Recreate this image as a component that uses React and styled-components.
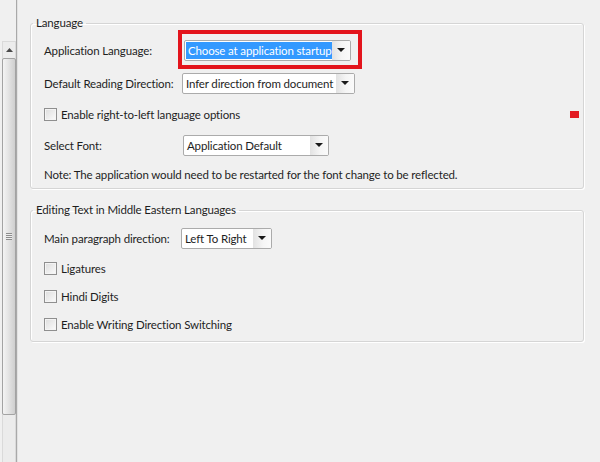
import styled, { createGlobalStyle } from 'styled-components';

const GlobalStyle = createGlobalStyle`
  html, body {
    margin: 0;
    padding: 0;
    background: #f0f0f0;
  }
  body {
    font-family: "Segoe UI", Lato, "Noto Sans", sans-serif;
    font-size: 11.5px;
    letter-spacing: -0.15px;
    color: #1e1e1e;
  }
`;

const Page = styled.div`
  display: flex;
  width: 600px;
  height: 462px;
  overflow: hidden;
  background: #f0f0f0;
`;

const Sidebar = styled.div`
  width: 17px;
  flex-shrink: 0;
  border-right: 1px solid #a9a9a9;
  box-shadow: 1px 0 0 #e2e2e2;
  display: flex;
  flex-direction: column;
  padding-top: 41px;
  box-sizing: border-box;
`;

const ScrollFrame = styled.div`
  flex: 1;
  margin-left: 2px;
  width: 14px;
  border: 1px solid #dadada;
  border-bottom: none;
  box-sizing: border-box;
  display: flex;
  flex-direction: column;
  background: #ececec;
`;

const ArrowButton = styled.div`
  height: 16px;
  display: flex;
  align-items: center;
  justify-content: center;
`;

const Thumb = styled.div`
  height: 355px;
  border: 1px solid #a3a3a3;
  border-radius: 2px;
  margin: 0 -1px;
  background: linear-gradient(to right, #f4f4f4 0%, #e4e4e4 45%, #cfcfcf 100%);
  display: flex;
  align-items: center;
  justify-content: center;
`;

const Grip = styled.div`
  width: 6px;
  height: 7px;
  background: repeating-linear-gradient(to bottom, #8d8d8d 0 1px, #eeeeee 1px 2px);
`;

const Content = styled.div`
  flex: 1;
  padding: 15px 16px 0 13px;
  display: flex;
  flex-direction: column;
  gap: 13px;
`;

const Group = styled.fieldset`
  margin: 0;
  border: 1px solid #d5d5d5;
  border-radius: 3px;
  box-shadow: inset 1px 1px 0 #ffffff, 1px 1px 0 #ffffff;
  padding: ${(p) => p.$padTop}px 4px ${(p) => p.$padBottom}px 13px;
  display: flex;
  flex-direction: column;
  gap: ${(p) => p.$gap}px;
  min-width: 0;
`;

const Legend = styled.legend`
  margin-left: -11px;
  padding: 0 3px;
  line-height: 16px;
  color: #1e1e1e;
`;

const Row = styled.div`
  display: flex;
  align-items: center;
  height: 22px;
`;

const Label = styled.span`
  width: ${(p) => p.$w}px;
  flex-shrink: 0;
  white-space: nowrap;
`;

const SelectWrap = styled.div`
  position: relative;
  width: ${(p) => p.$w}px;
  height: 21px;
`;

const SelectBox = styled.div`
  display: flex;
  height: 100%;
  box-sizing: border-box;
  border: 1px solid #ababab;
  border-radius: 2px;
  background: #ffffff;
  overflow: hidden;
`;

const Value = styled.div`
  flex: 1;
  display: flex;
  align-items: center;
  padding: ${(p) => (p.$selected ? '1px' : '0 0 0 3px')};
  white-space: nowrap;
  overflow: hidden;
`;

const Highlight = styled.span`
  display: flex;
  align-items: center;
  height: 100%;
  padding: 0 2px 0 2px;
  flex: 1;
  background: #3399ff;
  color: #ffffff;
`;

const DropButton = styled.div`
  width: 18px;
  flex-shrink: 0;
  display: flex;
  align-items: center;
  justify-content: center;
  background: linear-gradient(to right, #e2e2e2 0%, #f5f5f5 55%, #fafafa 100%);
`;

const Arrow = styled.span`
  width: 0;
  height: 0;
  border-left: 4px solid transparent;
  border-right: 4px solid transparent;
  border-top: 4px solid #1a1a1a;
`;

const Annotation = styled.div`
  position: absolute;
  top: -10px;
  left: -6px;
  right: -11px;
  bottom: -8px;
  border: 4px solid #e3141c;
  pointer-events: none;
`;

const CheckRow = styled.label`
  display: flex;
  align-items: center;
  height: 18px;
  gap: 4px;
`;

const Box = styled.span`
  width: 11px;
  height: 11px;
  border: 1px solid #8f8f8f;
  background: linear-gradient(135deg, #dcdcdc 0%, #f2f2f2 70%, #fbfbfb 100%);
  box-shadow: inset 0 0 0 1px #f4f4f4;
  flex-shrink: 0;
`;

const Marker = styled.span`
  margin-left: auto;
  width: 9px;
  height: 7px;
  background: #e31c23;
`;

const Note = styled.div`
  height: 16px;
  line-height: 16px;
  white-space: nowrap;
`;

const Select = ({ width, value, selected, marked }) => (
  <SelectWrap $w={width}>
    <SelectBox>
      <Value $selected={selected}>{selected ? <Highlight>{value}</Highlight> : value}</Value>
      <DropButton>
        <Arrow />
      </DropButton>
    </SelectBox>
    {marked && <Annotation />}
  </SelectWrap>
);

const Check = ({ children, marker }) => (
  <CheckRow>
    <Box />
    <span>{children}</span>
    {marker && <Marker />}
  </CheckRow>
);

const App = () => {
  return (
    <>
      <GlobalStyle />
      <Page>
        <Sidebar>
          <ScrollFrame>
            <ArrowButton>
              <svg width="7" height="4" viewBox="0 0 7 4">
                <path d="M0 4 L3.5 0 L7 4 Z" fill="#4a4a4a" />
              </svg>
            </ArrowButton>
            <Thumb>
              <Grip />
            </Thumb>
          </ScrollFrame>
        </Sidebar>
        <Content>
          <Group $padTop={8} $padBottom={5} $gap={11}>
            <Legend>Language</Legend>
            <Row>
              <Label $w={140}>Application Language:</Label>
              <Select width={167} value="Choose at application startup" selected marked />
            </Row>
            <Row>
              <Label $w={138}>Default Reading Direction:</Label>
              <Select width={173} value="Infer direction from document" />
            </Row>
            <Check marker>Enable right-to-left language options</Check>
            <Row>
              <Label $w={139}>Select Font:</Label>
              <Select width={146} value="Application Default" />
            </Row>
            <Note>Note: The application would need to be restarted for the font change to be reflected.</Note>
          </Group>
          <Group $padTop={9} $padBottom={8} $gap={10}>
            <Legend>Editing Text in Middle Eastern Languages</Legend>
            <Row>
              <Label $w={137}>Main paragraph direction:</Label>
              <Select width={91} value="Left To Right" />
            </Row>
            <Check>Ligatures</Check>
            <Check>Hindi Digits</Check>
            <Check>Enable Writing Direction Switching</Check>
          </Group>
        </Content>
      </Page>
    </>
  );
};

export default App;
